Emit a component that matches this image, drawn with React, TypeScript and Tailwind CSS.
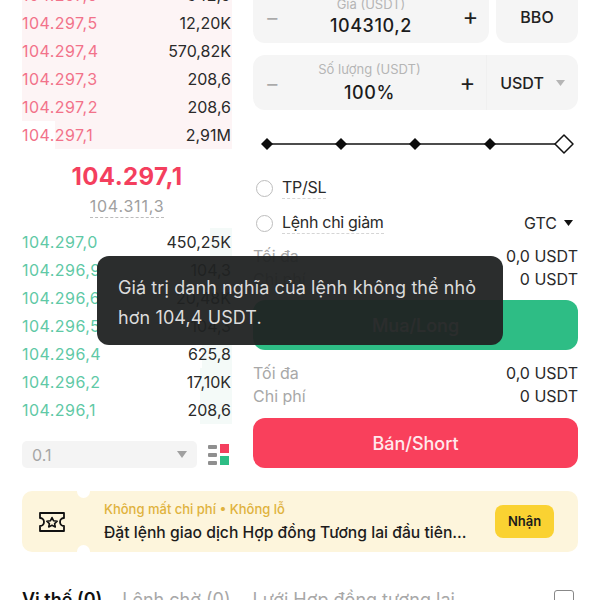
const asks: [string, string, number][] = [
  ["104.297,6", "542,9", 210],
  ["104.297,5", "12,20K", 210],
  ["104.297,4", "570,82K", 210],
  ["104.297,3", "208,6", 210],
  ["104.297,2", "208,6", 210],
  ["104.297,1", "2,91M", 177],
];
const bids: [string, string, number][] = [
  ["104.297,0", "450,25K", 22],
  ["104.296,9", "104,3", 22],
  ["104.296,6", "20,48K", 22],
  ["104.296,5", "104,3", 26],
  ["104.296,4", "625,8", 30],
  ["104.296,2", "17,10K", 32],
  ["104.296,1", "208,6", 32],
];

function Row({ p, q, w, ask }: { p: string; q: string; w: number; ask: boolean }) {
  return (
    <div className="relative flex h-[28px] items-center justify-between text-[16px] text-[#2a2a2a]">
      <div className={`absolute right-0 top-0 bottom-0 ${ask ? "bg-[#fdf4f5]" : "bg-[#f4faf8]"}`} style={{ width: w }} />
      <span className={`relative tracking-[0.45px] ${ask ? "text-[#f2728a]" : "text-[#5fc9a6]"}`}>{p}</span>
      <span className="relative pr-[1px]">{q}</span>
    </div>
  );
}

function Stepper({ label, value, gap }: { label: string; value: string; gap: string }) {
  return (
    <div className="flex flex-1 items-center">
      <span className="w-[40px] pl-[12px] text-[22px] leading-none text-[#aaaaaa]">−</span>
      <div className="flex flex-1 flex-col items-center">
        <span className="text-[13px] leading-[16px] text-[#b5b5b5]">{label}</span>
        <span className={`text-[18px] font-medium leading-[22px] tracking-[0.6px] text-[#1c1c1c] ${gap}`}>{value}</span>
      </div>
      <span className="w-[40px] pl-[3px] text-center text-[24px] leading-none text-[#222222]">+</span>
    </div>
  );
}

function Slider() {
  const xs = [14, 88, 162, 237];
  return (
    <svg width="325" height="24" viewBox="0 0 325 24" className="block">
      <line x1="14" y1="12" x2="302" y2="12" stroke="#111" strokeWidth="1.5" />
      {xs.map((x) => (
        <path key={x} d={`M${x} 6 L${x + 6} 12 L${x} 18 L${x - 6} 12 Z`} fill="#0d0d0d" />
      ))}
      <path d="M311 3 L320 12 L311 21 L302 12 Z" fill="#fff" stroke="#111" strokeWidth="1.5" strokeLinejoin="round" />
    </svg>
  );
}

function Radio({ label }: { label: string }) {
  return (
    <div className="flex items-center gap-[9px]">
      <span className="h-[17px] w-[17px] rounded-full border-[1.5px] border-[#bdbdbd]" />
      <span className="border-b border-dashed border-[#d5d5d5] text-[16px] leading-[21px] tracking-[-0.3px] text-[#2a2a2a]">{label}</span>
    </div>
  );
}

function Info({ a, b, top }: { a: string; b: string; top: string }) {
  return (
    <div className={`flex h-[23px] items-center justify-between text-[16px] ${top}`}>
      <span className="text-[#a8a8a8]">{a}</span>
      <span className="text-[#2a2a2a]">{b}</span>
    </div>
  );
}

export default function App() {
  return (
    <div className="relative h-[600px] w-[600px] overflow-hidden bg-white font-['Inter',sans-serif]">
      <div className="-mt-[19px] flex gap-[21px] px-[22px]">
        <div className="w-[210px] shrink-0">
          {asks.map((r) => (
            <Row key={r[0]} p={r[0]} q={r[1]} w={r[2]} ask />
          ))}
          <div className="flex flex-col items-center">
            <span className="mt-[13px] text-[24px] font-bold leading-[30px] tracking-[0.4px] text-[#f43f5e]">104.297,1</span>
            <span className="mt-[3px] border-b border-dashed border-[#bbbbbb] text-[16px] leading-[22px] tracking-[0.8px] text-[#a0a0a0]">104.311,3</span>
          </div>
          <div className="mt-[10px]">
            {bids.map((r) => (
              <Row key={r[0]} p={r[0]} q={r[1]} w={r[2]} ask={false} />
            ))}
          </div>
          <div className="mt-[17px] flex items-center justify-between">
            <div className="flex h-[27px] w-[175px] items-center justify-between rounded-[5px] bg-[#f4f4f4] px-[10px] text-[16px] text-[#a6a6a6]">
              <span>0.1</span>
              <svg width="10" height="7" viewBox="0 0 10 7"><path d="M0 0 H10 L5 7 Z" fill="#a0a0a0" /></svg>
            </div>
            <svg width="24" height="22" viewBox="0 0 24 22" className="-ml-[1px]">
              <rect x="0" y="1" width="9" height="4" fill="#8f8f8f" rx="1" />
              <rect x="0" y="9" width="9" height="4" fill="#8f8f8f" rx="1" />
              <rect x="0" y="17" width="9" height="4" fill="#8f8f8f" rx="1" />
              <rect x="12" y="0" width="9" height="9" fill="#f43f5e" />
              <rect x="12" y="12" width="9" height="9" fill="#2ebd85" />
            </svg>
          </div>
        </div>

        <div className="w-[325px] shrink-0">
          <div className="flex h-[62px] gap-[7px]">
            <div className="flex flex-1 items-end rounded-b-[12px] bg-[#f5f5f5] pb-[6px]">
              <Stepper label="Giá (USDT)" value="104310,2" gap="mt-[3px]" />
            </div>
            <div className="flex w-[82px] items-center justify-center rounded-b-[12px] bg-[#f5f5f5] pt-[10px] text-[16px] font-medium text-[#222222]">BBO</div>
          </div>
          <div className="mt-[12px] flex h-[55px] rounded-[12px] bg-[#f5f5f5]">
            <Stepper label="Số lượng (USDT)" value="100%" gap="mt-[5px]" />
            <div className="flex w-[92px] items-center justify-center gap-[12px] border-l border-[#f0f0f0] text-[16px] font-medium text-[#222222]">
              <span>USDT</span>
              <svg width="9" height="6" viewBox="0 0 9 6"><path d="M0 0 H9 L4.5 6 Z" fill="#b5b5b5" /></svg>
            </div>
          </div>
          <div className="mt-[22px]"><Slider /></div>
          <div className="mt-[21px] px-[3px]"><Radio label="TP/SL" /></div>
          <div className="mt-[12px] flex items-center justify-between pl-[3px] pr-[5px]">
            <Radio label="Lệnh chỉ giảm" />
            <div className="flex items-center gap-[7px] text-[16px] text-[#2a2a2a]">
              <span>GTC</span>
              <svg width="9" height="6" viewBox="0 0 9 6"><path d="M0 0 H9 L4.5 6 Z" fill="#111" /></svg>
            </div>
          </div>
          <Info a="Tối đa" b="0,0 USDT" top="mt-[9px]" />
          <Info a="Chi phí" b="0 USDT" top="" />
          <div className="mt-[10px] flex h-[50px] items-center justify-center rounded-[12px] bg-[#2ebd85] text-[18px] font-medium text-white">Mua/Long</div>
          <Info a="Tối đa" b="0,0 USDT" top="mt-[11px]" />
          <Info a="Chi phí" b="0 USDT" top="" />
          <div className="mt-[11px] flex h-[50px] items-center justify-center rounded-[12px] bg-[#f9405c] text-[18px] font-medium text-[#ffe9ec]">Bán/Short</div>
        </div>
      </div>

      <div className="relative mx-[22px] mt-[23px] flex h-[61px] items-center overflow-hidden rounded-[10px] bg-[#fdf5dc]">
        <span className="absolute -top-[6px] left-[55px] h-[13px] w-[13px] rounded-full bg-white" />
        <span className="absolute -bottom-[6px] left-[55px] h-[13px] w-[13px] rounded-full bg-white" />
        <div className="flex w-[60px] shrink-0 justify-center">
          <svg width="28" height="24" viewBox="0 0 28 24" fill="none" stroke="#111" strokeWidth="1.8" strokeLinejoin="round">
            <path d="M2 3 H26 V8 A3.5 3.5 0 0 0 26 16 V21 H2 V16 A3.5 3.5 0 0 0 2 8 Z" />
            <path d="M14 7.5 L15.6 10.8 L19.2 11.2 L16.6 13.6 L17.3 17 L14 15.3 L10.7 17 L11.4 13.6 L8.8 11.2 L12.4 10.8 Z" strokeWidth="1.6" />
          </svg>
        </div>
        <div className="ml-[22px] min-w-0 flex-1">
          <div className="text-[13px] font-medium leading-[18px] text-[#e0b23c]">Không mất chi phí • Không lỗ</div>
          <div className="mt-[5px] text-[15.7px] font-medium leading-[20px] text-[#1c1c1c]">Đặt lệnh giao dịch Hợp đồng Tương lai đầu tiên...</div>
        </div>
        <div className="mr-[24px] flex h-[33px] w-[59px] shrink-0 items-center justify-center rounded-[8px] bg-[#fad232] text-[13px] font-semibold text-[#1c1c1c]">Nhận</div>
      </div>

      <div className="mt-[36px] flex items-center px-[22px] text-[18px] leading-[24px]">
        <span className="font-semibold text-[#111111]">Vị thế (0)</span>
        <span className="ml-[20px] text-[#a8a8a8]">Lệnh chờ (0)</span>
        <span className="ml-[22px] text-[#a8a8a8]">Lưới Hợp đồng tương lai</span>
        <span className="ml-auto mr-[4px] h-[20px] w-[20px] rounded-[3px] border-[1.5px] border-[#888888]" />
      </div>

      <div className="absolute left-[97px] top-[256px] h-[89px] w-[406px] rounded-[12px] bg-[#202222]/95 pl-[21px] pt-[17px] text-[18px] leading-[30px] tracking-[0.1px] text-[#dcdcdc]">
        Giá trị danh nghĩa của lệnh không thể nhỏ<br />hơn 104,4 USDT.
      </div>
    </div>
  );
}
